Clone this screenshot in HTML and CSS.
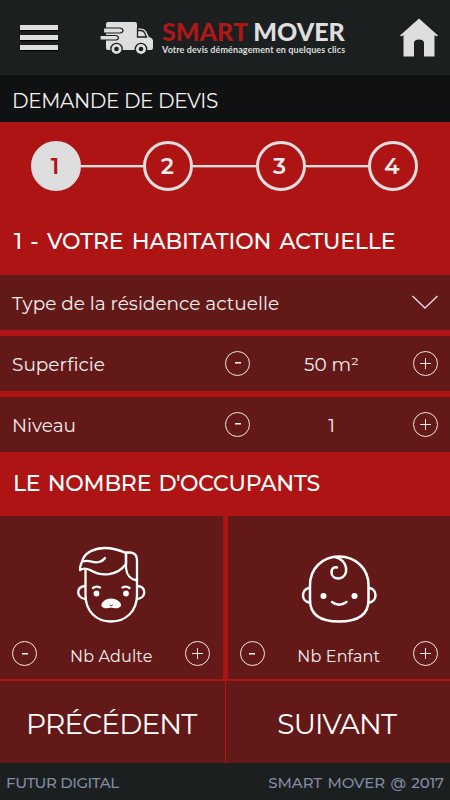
FILE: index.html
```html
<!DOCTYPE html>
<html lang="fr">
<head>
    <meta charset="UTF-8">
    <meta name="viewport" content="width=device-width, initial-scale=1.0">
    <title>Smart Mover</title>
    <link rel="stylesheet" href="styles.css">
</head>
<body>
    <header class="header">
        <div class="menu">
            <span></span>
            <span></span>
            <span></span>
        </div>
        <div class="logo">
            <svg class="truck" width="54" height="34" viewBox="0 0 54 34">
                <path fill="#dedede" d="M8 1H35Q37 1 37 3V7.500H41Q44.500 7.500 46 10L49 16Q53 17 53 20V27Q53 29 51 29H8Q6 29 6 27V3Q6 1 8 1Z"/>
                <path fill="#dedede" stroke="#1b1f1f" stroke-width="1.200" d="M3.500 7H20Q23 7.500 23 9.500T20 12H3.500Z"/>
                <path fill="#dedede" stroke="#1b1f1f" stroke-width="1.200" d="M0 14.500H16Q18.500 15 18.500 16.800T16 19H0Z"/>
                <path fill="none" stroke="#1b1f1f" stroke-width="1.300" d="M37.500 7V16H46.500L44.500 11.500Q43 9.500 41 9.500H37.500"/>
                <circle cx="16.500" cy="28" r="5.700" fill="#dedede" stroke="#1b1f1f" stroke-width="1.300"/>
                <circle cx="41" cy="28" r="5.700" fill="#dedede" stroke="#1b1f1f" stroke-width="1.300"/>
                <circle cx="16.500" cy="28" r="2.300" fill="#1b1f1f"/>
                <circle cx="41" cy="28" r="2.300" fill="#1b1f1f"/>
            </svg>
            <div class="logo-text">
                <div class="brand"><span class="red">SMART</span> MOVER</div>
                <div class="slogan">Votre devis déménagement en quelques clics</div>
            </div>
        </div>
        <svg class="home" width="38" height="40" viewBox="0 0 38 40">
            <path fill="#dedede" d="M19 0.500L38 17.500L36.500 18.500L34.500 17V38.500H24V25Q24 21.500 19 21.500T14 25V38.500H3.500V17L1.500 18.500L0 17.500Z"/>
        </svg>
    </header>

    <div class="page-title"><span>DEMANDE DE DEVIS</span></div>

    <div class="steps">
        <div class="step active">1</div>
        <div class="line"></div>
        <div class="step">2</div>
        <div class="line"></div>
        <div class="step">3</div>
        <div class="line"></div>
        <div class="step">4</div>
    </div>

    <h2 class="title title-home">1 - VOTRE HABITATION ACTUELLE</h2>

    <div class="rows">
        <div class="row">
            <span class="label">Type de la résidence actuelle</span>
            <svg class="chevron" width="28" height="16" viewBox="0 0 28 16">
                <path fill="none" stroke="#e6dada" stroke-width="1.400" d="M2.500 2L15 14L27.500 2"/>
            </svg>
        </div>
        <div class="row">
            <span class="label">Superficie</span>
            <div class="counter">
                <button class="btn minus"></button>
                <span class="value">50 m²</span>
                <button class="btn plus"></button>
            </div>
        </div>
        <div class="row">
            <span class="label">Niveau</span>
            <div class="counter">
                <button class="btn minus"></button>
                <span class="value">1</span>
                <button class="btn plus"></button>
            </div>
        </div>
    </div>

    <h2 class="title title-people">LE NOMBRE D'OCCUPANTS</h2>

    <div class="cards">
        <div class="card">
            <svg class="face" width="70" height="78" viewBox="0 0 70 78" fill="none" stroke="#fff" stroke-width="2.300" stroke-linecap="round" stroke-linejoin="round">
                <path d="M9.500 24V49C9.500 65 20 75.500 35 75.500S61 65 61 49V14Q61 7 54 6.500H50"/>
                <path d="M4 24C3.500 19 6 17 7 13C10 6 19 2 29 2C38 2 43 4 50 7V18C41 30 26 31 14 24C10 22 7 22 4 24Z"/>
                <path d="M7 15.500C14 13 17 18 23 16Q27 15 29 12"/>
                <path d="M50 7V22Q51 33 61 34.500"/>
                <path d="M9 40C0 41 0 51 9 53M61.500 40C70.500 41 70.500 51 61.500 53"/>
                <path d="M17 42Q20 39.500 24 41.500M46.500 41.500Q50 39.500 53.500 42"/>
                <circle cx="20.500" cy="47.500" r="2.900" fill="#fff" stroke="none"/>
                <circle cx="50" cy="47.500" r="2.900" fill="#fff" stroke="none"/>
                <path fill="#fff" stroke="none" d="M25.500 60C24.500 57 29 52.500 35 52.500S46 57 45 60C43 63 38 62.500 35 61.500C32 62.500 27 63 25.500 60Z"/>
                <path stroke="#641919" stroke-width="0.900" d="M34 59.300Q35.300 60 36.500 59.300"/>
            </svg>
            <div class="card-bottom">
                <button class="btn minus"></button>
                <span class="name">Nb Adulte</span>
                <button class="btn plus"></button>
            </div>
        </div>
        <div class="card">
            <svg class="face" width="76" height="69" viewBox="0 0 76 69" fill="none" stroke="#fff" stroke-width="2.500" stroke-linecap="round" stroke-linejoin="round">
                <path d="M38 1.500C21 1.500 9 14 9 30V45C9 59 18 66.500 38 66.500S67.500 59 67.500 45V30C67.500 14 55 1.500 38 1.500Z"/>
                <path d="M34 2C42 4 46 10 45 17C43 26 30.500 25 30.500 17.500C30.500 12.500 34 12 36 12.500"/>
                <path d="M8 33C0 34.500 0 46 8 47.500M68.500 33C76.500 34.500 76.500 46 68.500 47.500"/>
                <circle cx="22.500" cy="41" r="3" fill="#fff" stroke="none"/>
                <circle cx="53.500" cy="41" r="3" fill="#fff" stroke="none"/>
                <path d="M31 47Q38 52.500 45.500 47"/>
            </svg>
            <div class="card-bottom">
                <button class="btn minus"></button>
                <span class="name">Nb Enfant</span>
                <button class="btn plus"></button>
            </div>
        </div>
    </div>

    <div class="nav">
        <button class="nav-btn">PRÉCÉDENT</button>
        <button class="nav-btn">SUIVANT</button>
    </div>

    <footer class="footer">
        <span class="company">FUTUR DIGITAL</span>
        <span class="copy">SMART MOVER @ 2017</span>
    </footer>
</body>
</html>
```
FILE: styles.css
```css
* {
    box-sizing: border-box;
}

body {
    margin: 0;
    width: 450px;
    height: 800px;
    overflow: hidden;
    display: flex;
    flex-direction: column;
    background: #ae1414;
    color: #f3eeee;
    font-family: Montserrat, Inter, sans-serif;
    white-space: nowrap;
}

button {
    font-family: inherit;
    color: inherit;
    border: none;
    padding: 0;
    cursor: pointer;
}

.header {
    height: 75px;
    padding: 0 12px 0 20px;
    display: flex;
    align-items: center;
    background: #1b1f1f;
}

.menu {
    width: 38px;
    display: flex;
    flex-direction: column;
    gap: 5px;
}

.menu span {
    height: 5px;
    background: #dedede;
    box-shadow: 0 1px 1px #000;
}

.logo {
    margin-left: 42px;
    display: flex;
    align-items: center;
    gap: 8px;
}

.logo-text {
    font-family: Lato, sans-serif;
    color: #dedede;
}

.brand {
    font-size: 25px;
    line-height: 26px;
    font-weight: 900;
    margin-top: -3px;
}

.brand .red {
    color: #ae1717;
}

.slogan {
    font-size: 9px;
    line-height: 11px;
    font-weight: 700;
    letter-spacing: 0.1px;
}

.home {
    margin-left: auto;
}

.page-title {
    height: 47px;
    padding-left: 12px;
    background: #101112;
    font-size: 20px;
    line-height: 52px;
    letter-spacing: -0.35px;
}

.steps {
    height: 89px;
    padding: 19px 32px 0 31px;
    display: flex;
}

.step {
    width: 50px;
    height: 50px;
    border: 3px solid #dedede;
    border-radius: 50%;
    font-size: 22.5px;
    font-weight: 600;
    line-height: 44px;
    text-align: center;
    padding-right: 2px;
}

.step.active {
    background: #dedede;
    color: #ae1414;
}

.line {
    flex: 1;
    height: 2px;
    margin-top: 24px;
    background: #dedede;
    box-shadow: 0 1px 0 #c06060;
}

.title {
    margin: 0;
    padding-left: 13px;
    height: 64px;
    line-height: 62px;
    color: #fff;
    font-size: 22px;
    font-weight: 500;
}

.title-home {
    padding-left: 14px;
    letter-spacing: -0.15px;
    word-spacing: 2.6px;
}

.title-people {
    line-height: 64px;
    letter-spacing: -0.2px;
    word-spacing: 1.5px;
}

.rows {
    display: flex;
    flex-direction: column;
    gap: 6px;
}

.row {
    height: 55px;
    padding: 0 12px 1px;
    display: flex;
    align-items: center;
    justify-content: space-between;
    background: #641919;
    font-size: 18.5px;
}

.label,
.value {
    padding-top: 2px;
}

.counter {
    width: 213px;
    display: flex;
    align-items: center;
    justify-content: space-between;
}

.btn {
    width: 25px;
    height: 25px;
    border: 1.5px solid #efe6e6;
    border-radius: 50%;
    background: center no-repeat transparent;
}

.minus {
    background-image: linear-gradient(#fff, #fff);
    background-size: 6px 1.5px;
}

.plus {
    background-image: linear-gradient(#efe6e6, #efe6e6), linear-gradient(#efe6e6, #efe6e6);
    background-size: 11px 1px, 1px 11px;
}

.cards {
    height: 163px;
    display: flex;
    gap: 5px;
}

.card {
    flex: 1;
    padding: 0 12px 13px;
    display: flex;
    flex-direction: column;
    justify-content: flex-end;
    align-items: center;
    background: #641919;
}

.card-bottom {
    width: 100%;
    margin-top: 17px;
    display: flex;
    align-items: center;
    justify-content: space-between;
}

.name {
    font-size: 16px;
    letter-spacing: 0.15px;
    padding-top: 5px;
}

.nav {
    height: 82px;
    margin-top: 2px;
    display: flex;
    gap: 1px;
}

.nav-btn {
    flex: 1;
    background: #641919;
    color: #fff;
    font-size: 28px;
    letter-spacing: -0.85px;
    padding: 4px 2px 0 0;
}

.footer {
    height: 37px;
    padding: 1px 6px 0;
    display: flex;
    align-items: center;
    justify-content: space-between;
    background: #1b1f1f;
    color: #838ca2;
    font-size: 15px;
    font-weight: 500;
}

.company {
    letter-spacing: -0.4px;
}

.copy {
    letter-spacing: -0.1px;
    word-spacing: 1.5px;
}
```
